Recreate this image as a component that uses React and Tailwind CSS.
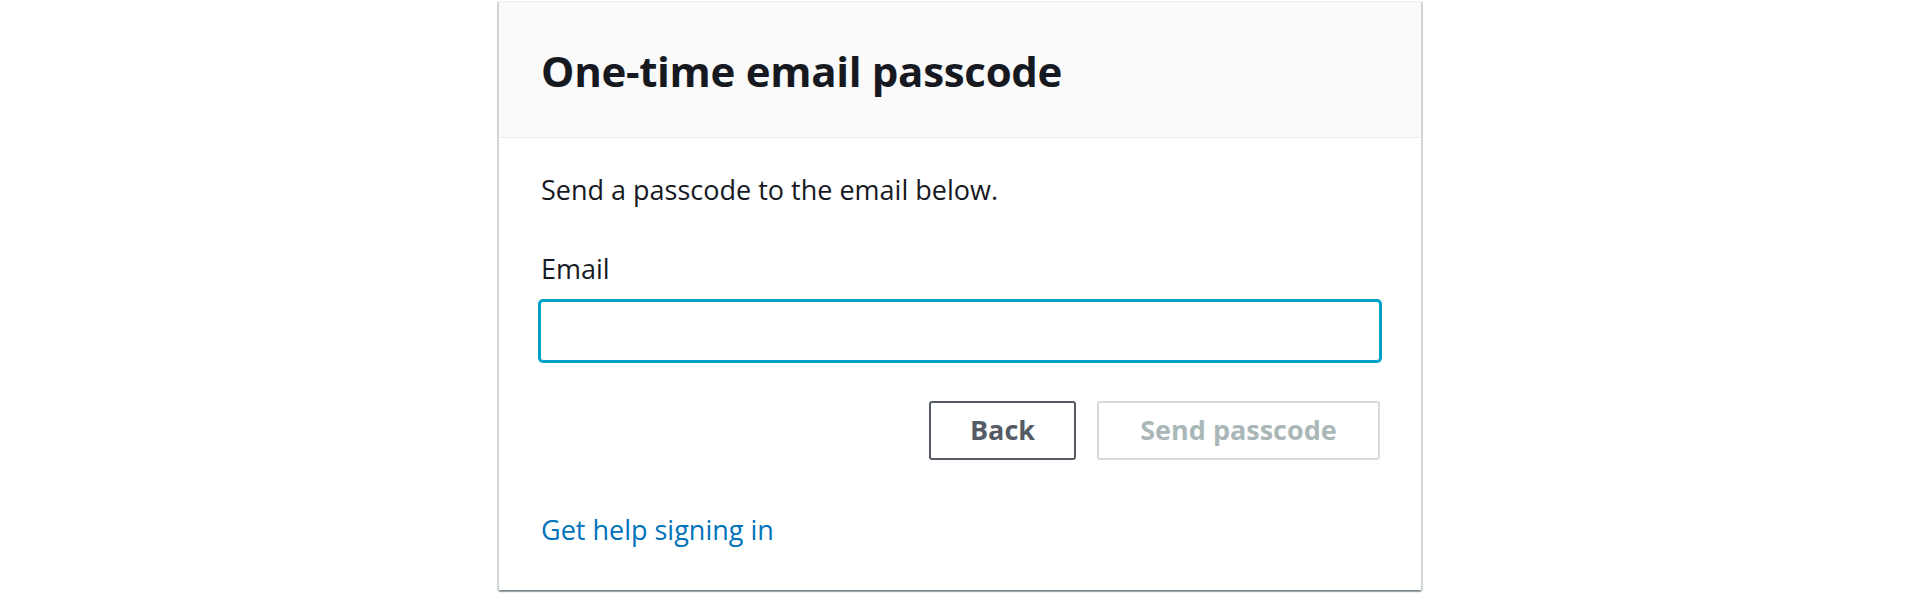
export default function App() {
  return (
    <div className="min-h-[594px] bg-white pt-px" style={{ fontFamily: '"Open Sans", "Noto Sans", sans-serif' }}>
      <div className="mx-auto w-[922px] border-t border-[#eaeded] bg-white shadow-[0_2px_1px_0_rgba(0,28,36,0.35),2px_1px_1px_0_rgba(0,28,36,0.15),-2px_1px_1px_0_rgba(0,28,36,0.15)]">
        {/* Encabezado */}
        <div className="border-b border-[#eaeded] bg-[#fafafa] px-[39px] pt-[41px] pb-[38px]">
          <h1 className="pl-[3px] text-[42px] leading-[56px] font-bold tracking-[-0.3px] text-[#16191f]">
            One-time email passcode
          </h1>
        </div>

        {/* Cuerpo */}
        <div className="px-[39px] pt-[36px] pb-[44px]">
          <p className="pl-[3px] text-[27px] leading-[32px] text-[#16191f]">
            Send a passcode to the email below.
          </p>

          <label className="mt-[47px] block pl-[3px] text-[27px] leading-[32px] text-[#16191f]">
            Email
          </label>
          <input
            type="email"
            className="mt-[14px] block h-[64px] w-full rounded-[5px] border-[3px] border-[#00a1c9] bg-white px-4 text-[27px] outline-none"
          />

          <div className="mt-[38px] flex justify-end gap-[21px] pr-[2px]">
            <button className="h-[59px] w-[147px] rounded-[3px] border-2 border-[#545b64] bg-white text-[27px] font-bold text-[#545b64]">
              Back
            </button>
            <button
              disabled
              className="h-[59px] w-[283px] rounded-[3px] border-2 border-[#d5dbdb] bg-white text-[27px] font-bold text-[#aab7b8]"
            >
              Send passcode
            </button>
          </div>

          <a href="#" className="mt-[54px] block w-fit pl-[3px] text-[27px] leading-[32px] text-[#0073bb]">
            Get help signing in
          </a>
        </div>
      </div>
    </div>
  );
}
